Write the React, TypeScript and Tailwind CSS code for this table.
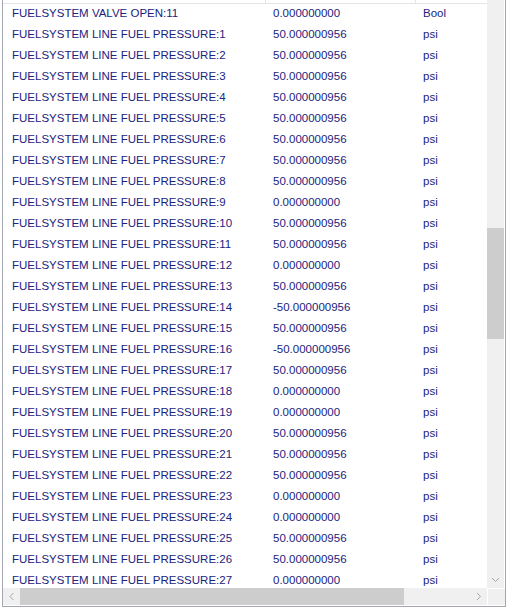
import React from "react";

const rows: [string, string, string][] = [
  ["FUELSYSTEM VALVE OPEN:11", "0.000000000", "Bool"],
  ...([
    "50.000000956",
    "50.000000956",
    "50.000000956",
    "50.000000956",
    "50.000000956",
    "50.000000956",
    "50.000000956",
    "50.000000956",
    "0.000000000",
    "50.000000956",
    "50.000000956",
    "0.000000000",
    "50.000000956",
    "-50.000000956",
    "50.000000956",
    "-50.000000956",
    "50.000000956",
    "0.000000000",
    "0.000000000",
    "50.000000956",
    "50.000000956",
    "50.000000956",
    "0.000000000",
    "0.000000000",
    "50.000000956",
    "50.000000956",
    "0.000000000",
  ].map((v, i) => [`FUELSYSTEM LINE FUEL PRESSURE:${i + 1}`, v, "psi"] as [string, string, string])),
];

function Chevron({ dir }: { dir: "down" | "left" | "right" }) {
  const pts =
    dir === "down" ? "1,1 4.5,4.5 8,1" : dir === "left" ? "4.5,1 1,4.5 4.5,8" : "1,1 4.5,4.5 1,8";
  const w = dir === "down" ? 9 : 6;
  const h = dir === "down" ? 6 : 9;
  return (
    <svg width={w} height={h} viewBox={`0 0 ${w} ${h}`}>
      <polyline points={pts} fill="none" stroke="#a6a6a6" strokeWidth="1" />
    </svg>
  );
}

export default function App() {
  return (
    <div
      className="w-[514px] h-[611px] bg-white pl-[2px] overflow-hidden"
      style={{ fontFamily: '"Liberation Sans", Arial, sans-serif' }}
    >
      <div className="w-[504px] h-[607px] border-l border-r border-b border-[#a3a8b0] flex flex-col">
        <div className="flex h-[588px]">
          <div className="w-[484px] flex flex-col overflow-hidden">
            <div className="h-[4px] shrink-0 border-b border-[#e5e5e5] flex">
              <div className="w-[263px] border-r border-[#e5e5e5]" />
              <div className="w-[150px] border-r border-[#e5e5e5]" />
              <div className="flex-1" />
            </div>
            <div className="flex-1 overflow-hidden">
              {rows.map(([name, val, unit], i) => (
                <div
                  key={i}
                  className="h-[21px] pb-[2px] flex items-center text-[11.5px] text-[#1a237e] whitespace-nowrap"
                >
                  <div className="w-[264px] pl-[9px]">{name}</div>
                  <div className="w-[150px] pl-[6px]">{val}</div>
                  <div className="flex-1 pl-[6px]">{unit}</div>
                </div>
              ))}
            </div>
          </div>
          <div className="w-[17px] bg-[#f0f0f0] flex flex-col">
            <div className="h-[228px]" />
            <div className="h-[111px] bg-[#cdcdcd]" />
            <div className="flex-1" />
            <div className="h-[17px] flex items-center justify-center">
              <Chevron dir="down" />
            </div>
          </div>
        </div>
        <div className="flex h-[17px]">
          <div className="w-[484px] bg-[#f0f0f0] flex">
            <div className="w-[17px] flex items-center justify-center">
              <Chevron dir="left" />
            </div>
            <div className="w-[384px] bg-[#cdcdcd]" />
            <div className="flex-1" />
            <div className="w-[17px] flex items-center justify-center">
              <Chevron dir="right" />
            </div>
          </div>
          <div className="w-[18px] bg-[#f0f0f0] border-l border-t border-white" />
        </div>
      </div>
    </div>
  );
}
